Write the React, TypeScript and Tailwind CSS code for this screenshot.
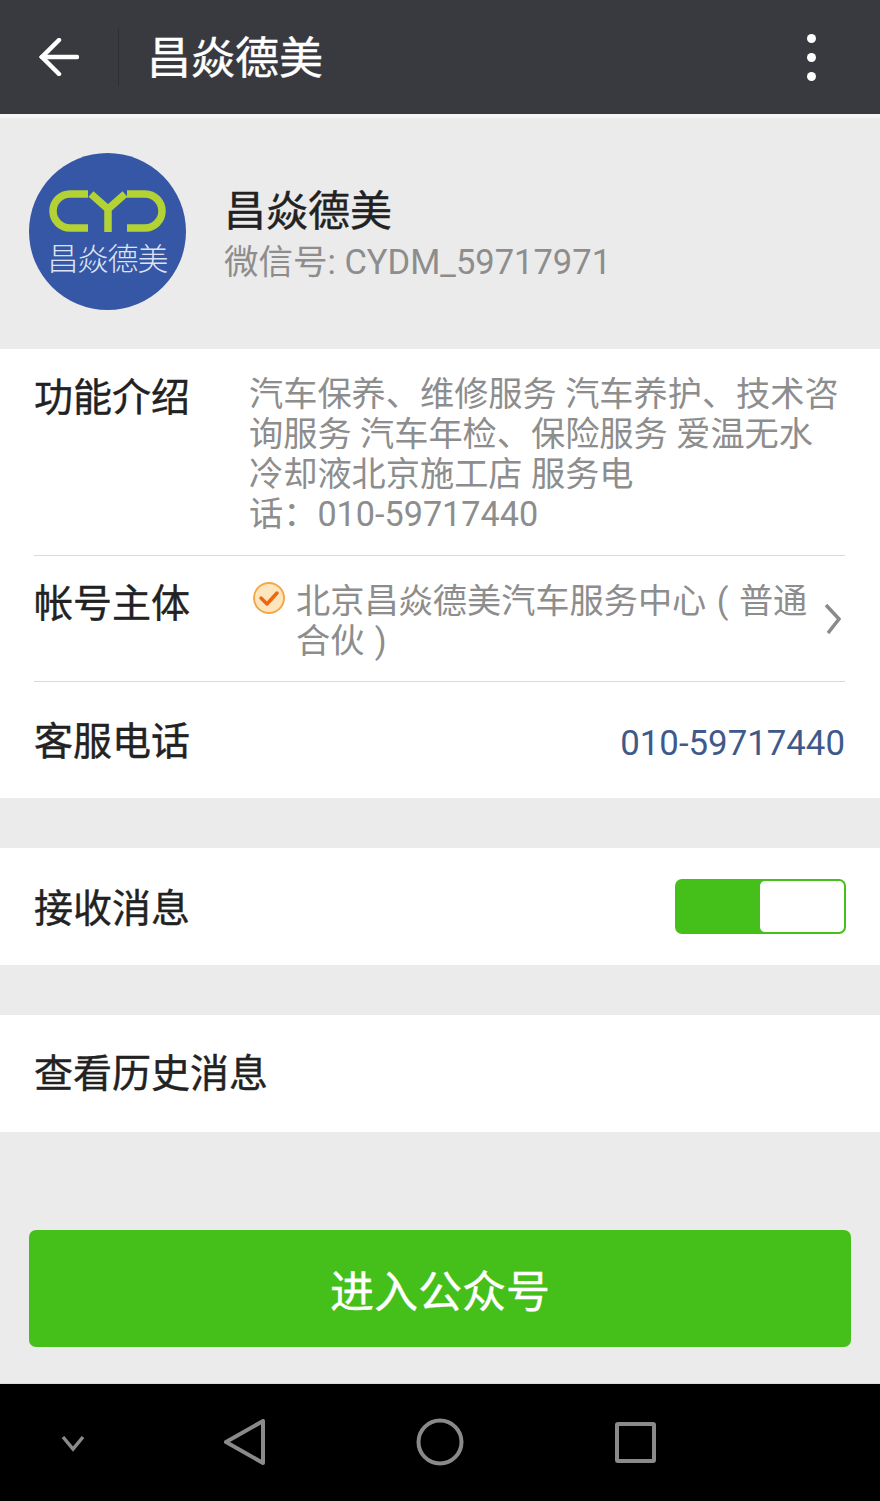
const CJK = 'font-["Roboto","Noto_Sans_CJK_SC",sans-serif]';
const LABEL = 'text-[39px] leading-[46px] text-[#222222] [-webkit-text-stroke:0.4px]';

function BackArrow() {
  return (
    <svg width="40" height="38" viewBox="0 0 40 38" fill="none" stroke="#fff" strokeWidth="4.5" strokeLinecap="round">
      <path d="M3 19H38" />
      <path d="M20 2L3 19L20 36" />
    </svg>
  );
}

function Logo() {
  return (
    <div className="w-[157px] h-[157px] shrink-0 rounded-full bg-[#3657a5] flex flex-col items-center">
      <svg className="mt-[36px] shrink-0" width="157" height="45" viewBox="0 0 157 45" fill="none" stroke="#b3d234" strokeWidth="7.5">
        <path d="M59 5H41a17 17 0 0 0 0 34H59" />
        <path d="M98 5H116a17 17 0 0 1 0 34H98" />
        <path d="M62 5L79 20L96 5M79 20V43" />
      </svg>
      <span className="mt-[7px] text-[31px] leading-[38px] font-light text-[#dbe3f4] whitespace-nowrap tracking-[-1px]">昌焱德美</span>
    </div>
  );
}

function VerifiedBadge() {
  return (
    <svg className="shrink-0" width="32" height="32" viewBox="0 0 32 32" fill="none">
      <circle cx="16" cy="16" r="15" fill="#fde6bd" stroke="#f3a848" strokeWidth="2" />
      <path d="M8 16L14 22L24 11" stroke="#f0650e" strokeWidth="3.5" strokeLinecap="round" strokeLinejoin="round" />
    </svg>
  );
}

function Chevron() {
  return (
    <svg className="shrink-0" width="17" height="30" viewBox="0 0 17 30" fill="none" stroke="#8a8a8a" strokeWidth="3.5">
      <path d="M2 1L15 15L4 29" />
    </svg>
  );
}

function NavIcons() {
  return (
    <div className="h-[118px] bg-black border-t border-[#dddddd] flex items-center pl-[61px] pb-[1px]">
      <svg className="mt-[2px]" width="24" height="17" viewBox="0 0 24 17" fill="none" stroke="#8a8a8a" strokeWidth="3.5">
        <path d="M2 2L12 14L22 2" />
      </svg>
      <svg className="ml-[139px]" width="42" height="46" viewBox="0 0 42 46" fill="none" stroke="#8a8a8a" strokeWidth="4" strokeLinejoin="round">
        <path d="M39 2V44L2 23Z" />
      </svg>
      <svg className="ml-[150px]" width="48" height="48" viewBox="0 0 48 48" fill="none" stroke="#8a8a8a" strokeWidth="4">
        <circle cx="24" cy="24" r="21.5" />
      </svg>
      <svg className="ml-[151px]" width="41" height="41" viewBox="0 0 41 41" fill="none" stroke="#8a8a8a" strokeWidth="4" strokeLinejoin="round">
        <rect x="2" y="2" width="37" height="37" rx="1" />
      </svg>
    </div>
  );
}

export default function App() {
  return (
    <div className={`w-[880px] h-[1501px] bg-[#ebebeb] overflow-hidden flex flex-col ${CJK}`}>
      {/* Title bar */}
      <div className="h-[114px] shrink-0 bg-[#393a3f] flex items-center">
        <div className="ml-[39px] mb-[1px]">
          <BackArrow />
        </div>
        <div className="ml-[39px] w-px h-[58px] bg-[#2e2f33]" />
        <h1 className="ml-[28px] mt-[4px] text-[44px] leading-none text-white font-normal whitespace-nowrap [-webkit-text-stroke:0.4px]">昌焱德美</h1>
        <div className="ml-auto mr-[64px] flex flex-col gap-[10px]">
          <div className="w-[9px] h-[9px] rounded-full bg-white" />
          <div className="w-[9px] h-[9px] rounded-full bg-white" />
          <div className="w-[9px] h-[9px] rounded-full bg-white" />
        </div>
      </div>
      <div className="h-[4px] shrink-0 bg-[#f4f4f4]" />

      {/* Profile */}
      <div className="h-[231px] shrink-0 flex items-center pl-[29px] pb-[4px]">
        <Logo />
        <div className="ml-[38px] mt-[5px]">
          <div className="mb-[6px] text-[42px] leading-[49px] text-[#222222] whitespace-nowrap [-webkit-text-stroke:0.4px]">昌焱德美</div>
          <div className="text-[34.5px] leading-[40px] text-[#8d8d8d] whitespace-nowrap">微信号: CYDM_59717971</div>
        </div>
      </div>

      {/* Details */}
      <div className="bg-white pl-[34px] pr-[35px]">
        <div className="h-[207px] flex border-b border-[#d9d9d9] pt-[26px]">
          <div className={`w-[215px] shrink-0 ${LABEL}`}>功能介绍</div>
          <p className="text-[34.2px] leading-[40px] -mt-[1px] text-[#8d8d8d]">
            汽车保养、维修服务 汽车养护、技术咨询服务 汽车年检、保险服务 爱温无水冷却液北京施工店 服务电<span className="whitespace-nowrap">话：010-59717440</span>
          </p>
        </div>
        <div className="h-[126px] flex border-b border-[#d9d9d9] pt-[25px]">
          <div className={`w-[219px] shrink-0 ${LABEL}`}>帐号主体</div>
          <div className="mt-[1px]">
            <VerifiedBadge />
          </div>
          <p className="ml-[11px] w-[519px] shrink-0 text-[34.2px] leading-[40px] text-[#8d8d8d] [word-spacing:2px]">
            北京昌焱德美汽车服务中心 ( 普通合伙 )
          </p>
          <div className="ml-[9px] mt-[23px]">
            <Chevron />
          </div>
        </div>
        <div className="h-[116px] flex items-center justify-between">
          <div className={`mt-[4px] ${LABEL}`}>客服电话</div>
          <div className="mt-[6px] text-[34.8px] text-[#3e5a8a] whitespace-nowrap">010-59717440</div>
        </div>
      </div>

      <div className="mt-[50px] h-[117px] shrink-0 bg-white px-[34px] flex items-center justify-between">
        <div className={`mt-[4px] ${LABEL}`}>接收消息</div>
        <div className="w-[171px] h-[55px] rounded-[7px] bg-[#45c01a] p-[2px] pl-[85px]">
          <div className="w-full h-full rounded-[5px] bg-white" />
        </div>
      </div>

      <div className="mt-[50px] h-[117px] shrink-0 bg-white px-[34px] flex items-center">
        <div className={LABEL}>查看历史消息</div>
      </div>

      {/* Enter button */}
      <button className="mt-[98px] mx-[29px] h-[117px] shrink-0 rounded-[7px] bg-[#45c01a] pt-[8px] text-[44px] text-white [-webkit-text-stroke:0.4px]">
        进入公众号
      </button>

      <div className="flex-1" />
      <NavIcons />
    </div>
  );
}
